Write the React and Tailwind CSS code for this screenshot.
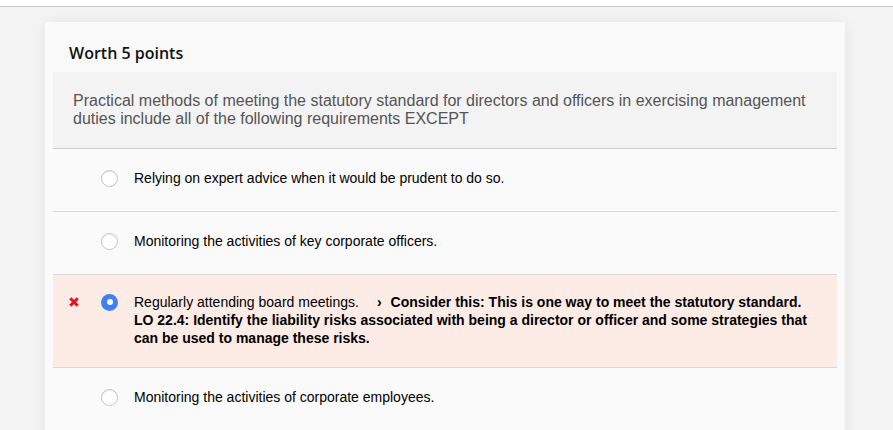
import React from "react";

const Radio = ({ checked }) =>
  checked ? (
    <span className="flex h-[17px] w-[17px] shrink-0 items-center justify-center rounded-full bg-[#3f80f5]">
      <span className="h-[6px] w-[6px] rounded-full bg-white" />
    </span>
  ) : (
    <span className="h-[17px] w-[17px] shrink-0 rounded-full border border-[#c4c4c4] bg-white shadow-[inset_0_1px_1px_rgba(0,0,0,0.08)]" />
  );

const Option = ({ text }) => (
  <div className="flex items-center border-b border-[#d9d9d9] pt-[20px] pb-[24px]">
    <div className="w-[48px] shrink-0" />
    <Radio />
    <p className="ml-[16px] text-[14px] leading-[18px] text-black">{text}</p>
  </div>
);

const App = () => {
  return (
    <div className="min-h-screen bg-white font-['Liberation_Sans',Arial,sans-serif]">
      <div className="h-[6px] bg-white" />
      <div className="h-[424px] overflow-hidden border-t border-[#c8c8c8] bg-[#f4f4f4] px-[45px] pt-[15px]">
        <div className="h-[500px] w-[800px] bg-[#fafafa] px-[8px] shadow-[0_0_14px_rgba(0,0,0,0.07)]">
          <h2 className="px-[16px] pt-[21px] pb-[9px] font-['Open_Sans',sans-serif] text-[16px] font-semibold leading-[20px] text-[#111]">
            Worth 5 points
          </h2>

          {/* question */}
          <div className="border-b border-[#cfcfcf] bg-[#f3f3f3] px-[20px] pt-[20px] pb-[20px] text-[16px] leading-[18px] text-[#555]">
            Practical methods of meeting the statutory standard for directors and officers in exercising management duties include all of the following requirements EXCEPT
          </div>

          <Option text="Relying on expert advice when it would be prudent to do so." />
          <Option text="Monitoring the activities of key corporate officers." />

          {/* selected wrong answer */}
          <div className="flex items-start border-b border-[#d9d9d9] bg-[#fdebe6] pt-[18px] pb-[20px]">
            <div className="flex h-[18px] w-[48px] shrink-0 items-center pl-[16px]">
              <svg width="10" height="10" viewBox="0 0 10 10">
                <path d="M1.3 1.3 L8.7 8.7 M8.7 1.3 L1.3 8.7" stroke="#e8101a" strokeWidth="3" strokeLinecap="butt" />
              </svg>
            </div>
            <div className="flex h-[18px] items-center">
              <Radio checked />
            </div>
            <p className="ml-[16px] w-[678px] text-[14px] leading-[18px] text-black">
              Regularly attending board meetings.
              <span className="ml-[18px] mr-[9px] font-bold">&#8250;</span>
              <span className="font-bold">
                Consider this: This is one way to meet the statutory standard.
                <br />
                LO 22.4: Identify the liability risks associated with being a director or officer and some strategies that can be used to manage these risks.
              </span>
            </p>
          </div>

          <Option text="Monitoring the activities of corporate employees." />
        </div>
      </div>
    </div>
  );
};

export default App;
